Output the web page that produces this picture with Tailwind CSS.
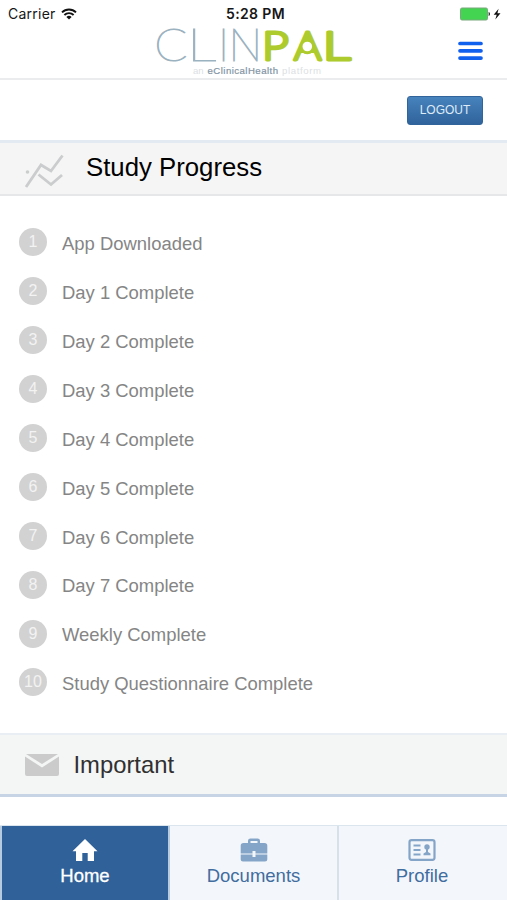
<!DOCTYPE html>
<html lang="en">
<head>
<meta charset="utf-8">
<title>ClinPal</title>
<script src="https://cdn.jsdelivr.net/npm/@tailwindcss/browser@4"></script>
</head>
<body class="bg-white">
<div class="flex h-[900px] w-[507px] flex-col overflow-hidden bg-white font-['Liberation_Sans',Arial,sans-serif]">

  <header class="relative h-20 shrink-0 border-b-2 border-[#ebecee]">
    <div class="grid h-7 grid-cols-[1fr_auto_1fr] items-center font-['Inter',sans-serif] text-[#161616]">
      <div class="flex items-center gap-[7px] pl-2">
        <span class="text-[14px] leading-none tracking-[0.250px]">Carrier</span>
        <svg class="-ml-0.5 h-3 w-4" viewBox="0 0 16 12" fill="none" stroke="#111" stroke-width="1.9">
          <path d="M1 4.400a10 10 0 0 1 14 0M3.400 7a6.600 6.600 0 0 1 9.200 0"/>
          <path d="M5.400 8.900a3.900 3.900 0 0 1 5.200 0L8 11.600z" fill="#111" stroke="none"/>
        </svg>
      </div>
      <span class="pl-1 text-[14px] leading-none font-semibold tracking-[0.350px]">5:28 PM</span>
      <div class="flex items-center justify-end pr-[5px]">
        <svg class="h-[14px] w-[42px]" viewBox="0 0 42 14">
          <rect x="0.500" y="1" width="27" height="12" rx="1.500" fill="#43d551" stroke="#78a87c"/>
          <path d="M28.600 5v4c1.800-.4 1.800-3.600 0-4z" fill="#222"/>
          <path d="M38.600 1.800 33.700 7.800h3l-1.400 4.800 5.200-6.400h-3.100z" fill="#111"/>
        </svg>
      </div>
    </div>
    <svg class="mx-auto block h-[50px] w-[200px] overflow-visible" viewBox="154 28 200 50">
      <g font-family="Lato" font-weight="200" font-size="45" fill="#9bb2c0" stroke="#9bb2c0" stroke-width="1.100">
        <text transform="translate(154.300 61) scale(1.080 1)">C</text>
        <text transform="translate(187 61) scale(1.300 1)">L</text>
        <text x="218" y="61">I</text>
        <text x="228.500" y="61">N</text>
      </g>
      <g font-family="Lato" font-weight="300" font-size="40" fill="#aecb2d" stroke="#aecb2d" stroke-width="3" stroke-linejoin="round">
        <text transform="translate(262 59.500) scale(1.160 1)">P</text>
        <text transform="translate(293.800 59.500) scale(1.060 1)">A</text>
        <text transform="translate(322.500 59.500) scale(1.400 1)">L</text>
      </g>
      <path d="M307.300 32 302 44h10.600z" fill="#aecb2d"/>
      <circle cx="307.300" cy="46.500" r="6.300" fill="#fff" stroke="#aecb2d" stroke-width="3"/>
      <text y="74" font-size="9.600" fill="#dcdfe3"><tspan x="193">an</tspan><tspan x="207.500" fill="#8194a4" stroke="#8194a4" stroke-width=".2" textLength="70.500">eClinicalHealth</tspan><tspan x="282" textLength="39">platform</tspan></text>
    </svg>
    <button class="absolute top-[41px] left-[458px]" aria-label="Menu">
      <svg class="block h-5 w-[25px]" viewBox="0 0 25 20" stroke="#1260ee" stroke-width="3.700" stroke-linecap="round"><path d="M2 2.500h21M2 9.800h21M2 17.100h21"/></svg>
    </button>
  </header>

  <div class="flex h-[60px] shrink-0 items-center justify-end pr-6">
    <button class="h-[29px] w-[76px] rounded-[3px] border border-[#31649b] bg-linear-to-b from-[#4783bd] to-[#30639b] text-[12px] text-[#dfebf7]">LOGOUT</button>
  </div>

  <section class="shrink-0">
    <div class="flex h-[56px] items-center border-t-3 border-b-2 border-t-[#e3eaf2] border-b-[#e6e7e8] bg-[#f5f5f5] pl-6">
      <svg class="mt-1 h-9 w-10" viewBox="24 152 40 36" fill="none" stroke="#cbcccd" stroke-width="2.800">
        <path d="M26 186 41 164l10 6 11.500-15.500M38.500 173.500 51 183.500l11-9.500"/><circle cx="27.500" cy="171" r="1.800" fill="#cbcccd" stroke="none"/>
      </svg>
      <h1 class="-mt-0.5 ml-[22px] text-[25.750px] leading-none text-black">Study Progress</h1>
    </div>
    <ol id="steps" class="flex h-[537px] flex-col pt-[22px] pl-[19px]"></ol>
  </section>

  <section class="flex h-[64px] shrink-0 items-center border-t-2 border-b-3 border-t-[#e9edf4] border-b-[#c6d4e5] bg-[#f4f5f5] pl-[25px]">
    <svg class="h-[22px] w-[34px]" viewBox="0 0 34 22" fill="#cbcbcb"><path d="M1 0h32L17 10z"/><path d="M0 2.500 17 13.500 34 2.500V20a2 2 0 0 1-2 2H2a2 2 0 0 1-2-2z"/></svg>
    <h2 class="ml-[14.500px] text-[23.800px] leading-none text-[#303030]">Important</h2>
  </section>

  <nav class="mt-auto grid h-[75px] shrink-0 grid-cols-[170px_169px_168px] border-t border-[#dbe5ed] bg-[#f3f6fb] text-[18.500px] leading-none text-[#416d9f]">
    <a class="flex flex-col items-center border-x-2 border-x-[#b6cbe0] bg-[#306199] pt-[13px] text-white">
      <svg class="h-[22px] w-[26px]" viewBox="0 0 26 22" fill="#fff"><path d="M13 0 25.500 12.200H22V22h-6.300v-8h-5.400v8H4v-9.800H.5z"/></svg>
      <span class="mt-1.5 [-webkit-text-stroke:.3px_white]">Home</span>
    </a>
    <a class="flex flex-col items-center border-r-2 border-[#d6e1ea] pt-3">
      <svg class="h-6 w-[28px]" viewBox="0 0 28 24" fill="#85a5c8"><path fill-rule="evenodd" d="M8 5V2.800Q8 .5 10.500 .5h7Q20 .5 20 2.800V5h4.500Q27.300 5 27.300 7.500V15.500h-11.800v-2.500h-3v2.500H.7V7.500Q.7 5 3.500 5zm2.500 0h7V3h-7z"/><path d="M.7 16.500h11.800V19h3v-2.500h11.800v5Q27.300 23.500 25 23.500H3Q.7 23.500.7 21.500z"/></svg>
      <span class="mt-[5px]">Documents</span>
    </a>
    <a class="flex flex-col items-center pt-[13px] pr-0.5">
      <svg class="h-[22px] w-[28px]" viewBox="0 0 28 22" fill="none" stroke="#85a5c8"><rect x="1.500" y="1.200" width="25" height="19.600" rx="2" stroke-width="2.200"/><path d="M5.500 6.500h7M5.500 11h7M5.500 15.500h7" stroke-width="1.800"/><circle cx="19" cy="8" r="2.700" fill="#85a5c8" stroke="none"/><path d="M18 10h2v3l2.500 1.500v1.800h-7v-1.800L18 13z" fill="#85a5c8" stroke="none"/></svg>
      <span class="mt-1.5">Profile</span>
    </a>
  </nav>
</div>
<script>
const steps = ['App Downloaded','Day 1 Complete','Day 2 Complete','Day 3 Complete','Day 4 Complete','Day 5 Complete','Day 6 Complete','Day 7 Complete','Weekly Complete','Study Questionnaire Complete'];
document.getElementById('steps').innerHTML = steps.map((label, i) =>
  `<li class="flex h-[48.900px] shrink-0 items-center gap-[15px]"><span class="flex size-7 items-center justify-center rounded-full bg-[#d2d2d2] text-[16px] leading-none text-[#f3f3f3]">${i + 1}</span><span class="pt-1 text-[18.450px] leading-none text-[#858585]">${label}</span></li>`).join('');
</script>
</body>
</html>
